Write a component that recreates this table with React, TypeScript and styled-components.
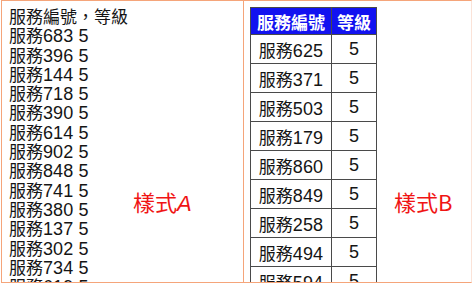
import React from 'react'
import styled, { createGlobalStyle } from 'styled-components'

const GlobalStyle = createGlobalStyle`
  body {
    margin: 0;
    overflow: hidden;
    background: #fff;
    font-family: "Liberation Sans", "Noto Sans CJK TC", sans-serif;
  }
`

const Page = styled.div`
  display: flex;
  width: 472px;
  height: 283px;
  padding-left: 1px;
  box-sizing: border-box;
`

const Panel = styled.div<{ width: number; last?: boolean }>`
  position: relative;
  width: ${p => p.width}px;
  height: 283px;
  box-sizing: border-box;
  overflow: hidden;
  border: 1px solid #f5a57a;
  border-right: ${p => (p.last ? '1px solid #fbe3d8' : 'none')};
`

const List = styled.div`
  padding: 7px 0 0 7px;
  font-size: 17px;
  line-height: 19.3px;
  color: #151515;
`

const Line = styled.div`
  white-space: nowrap;
`

// digits in the shot are a touch wider than the CJK glyph size suggests
const Num = styled.span`
  font-size: 18px;
  letter-spacing: 0.1px;
`

const Label = styled.div<{ left: number }>`
  position: absolute;
  left: ${p => p.left}px;
  top: 186px;
  font-family: "Noto Sans CJK TC", sans-serif;
  font-size: 22px;
  line-height: 28px;
  color: #f01414;
  em {
    font-family: "Liberation Sans", sans-serif;
    font-style: italic;
  }
`

const Table = styled.table`
  border-collapse: collapse;
  margin: 6px 0 0 6px;
  font-size: 17px;
  color: #151515;
`

const Th = styled.th<{ narrow?: boolean }>`
  background: #1212f0;
  color: #fff;
  font-weight: bold;
  height: 26px;
  padding: 0 ${p => (p.narrow ? 5 : 6)}px;
  border: 1px solid #4a4a4a;
  white-space: nowrap;
`

const Td = styled.td`
  height: 28px;
  padding: 0 6px;
  text-align: center;
  border: 1px solid #4a4a4a;
  white-space: nowrap;
`

const listItems = ['683', '396', '144', '718', '390', '614', '902', '848', '741', '380', '137', '302', '734', '619']
const tableItems = ['625', '371', '503', '179', '860', '849', '258', '494', '594']

const App = () => {
  return (
    <>
      <GlobalStyle />
      <Page>
        <Panel width={242}>
          <List>
            <Line>服務編號，等級</Line>
            {listItems.map(n => (
              <Line key={n}>服務<Num>{n} 5</Num></Line>
            ))}
          </List>
          <Label left={131}>樣式<em>A</em></Label>
        </Panel>
        <Panel width={229} last>
          <Table>
            <thead>
              <tr>
                <Th>服務編號</Th>
                <Th narrow>等級</Th>
              </tr>
            </thead>
            <tbody>
              {tableItems.map(n => (
                <tr key={n}>
                  <Td>服務<Num>{n}</Num></Td>
                  <Td><Num>5</Num></Td>
                </tr>
              ))}
            </tbody>
          </Table>
          <Label left={150}>樣式B</Label>
        </Panel>
      </Page>
    </>
  )
}

export default App
